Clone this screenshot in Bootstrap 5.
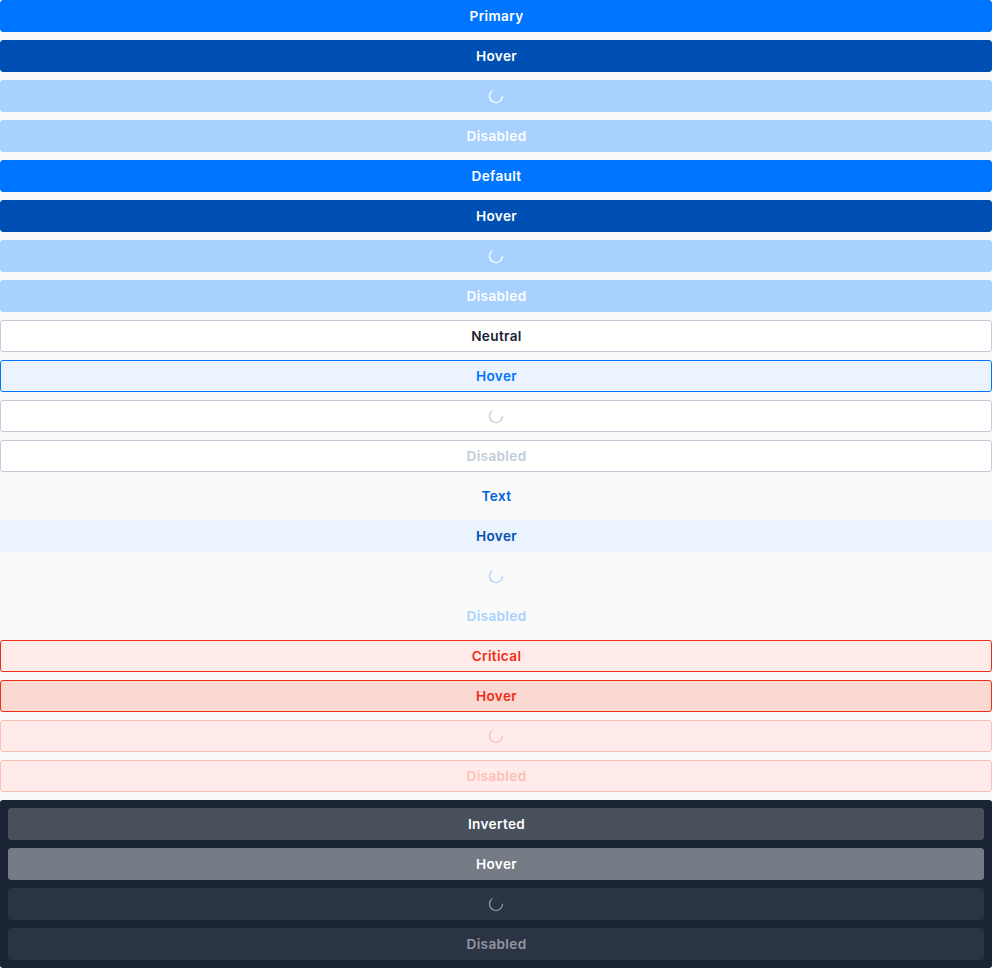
<!DOCTYPE html>
<html lang="en">
<head>
<meta charset="utf-8">
<meta name="viewport" content="width=device-width, initial-scale=1">
<title>Buttons</title>
<link href="https://cdn.jsdelivr.net/npm/bootstrap@5.3.0/dist/css/bootstrap.min.css" rel="stylesheet">
<style>
body{background:#fafafa;font-family:Inter,sans-serif}
.ui-btn{--bs-btn-font-family:Inter,sans-serif;--bs-btn-font-size:13.6px;--bs-btn-font-weight:600;--bs-btn-line-height:20px;--bs-btn-padding-y:5px;--bs-btn-padding-x:16px;--bs-btn-border-radius:3px;--bs-btn-color:var(--fg);--bs-btn-bg:var(--fill);--bs-btn-border-color:var(--line,transparent);--bs-btn-hover-color:var(--fg);--bs-btn-hover-bg:var(--fill);--bs-btn-hover-border-color:var(--line,transparent);--bs-btn-disabled-color:var(--fg);--bs-btn-disabled-bg:var(--fill);--bs-btn-disabled-border-color:var(--line,transparent);--bs-btn-disabled-opacity:1;height:32px;letter-spacing:.35px}
.ui-btn:not(.d-flex){padding-left:17px}
.solid{--fg:#fff;--fill:#0075ff;--line:#0075ff}
.solid.is-hover{--fill:#0050b3;--line:#0050b3}
.solid:disabled{--fill:#a8d1ff;--line:#a8d1ff}
.neutral{--fg:#1a2233;--fill:#fff;--line:#c2ccd6}
.neutral.is-hover{--fg:#0075ff;--fill:#ebf3ff;--line:#0075ff}
.neutral:disabled{--fg:#c2ccd6}
.plain{--fg:#0062d6;--fill:transparent}
.plain.is-hover{--fg:#0050b3;--fill:#ebf3ff}
.plain:disabled{--fg:#a8d1ff}
.critical{--fg:#f02d16;--fill:#ffebe9;--line:#f02d16}
.critical.is-hover{--fill:#fbd9d3}
.critical:disabled{--fg:#fcc0b8;--line:#fcc0b8}
.inverted{--fg:#fff;--fill:#48505c;--line:#48505c}
.inverted.is-hover{--fill:#757b84;--line:#757b84}
.inverted:disabled{--fg:#92979f;--fill:#2b3445;--line:#2b3445}
.dark-panel{background:#1a2333;border-radius:3px}
.spin{width:16px;height:16px}
</style>
</head>
<body>
<svg class="d-none"><symbol id="spin" viewBox="0 0 16 16"><path d="M4.1 2.8A6.5 6.5 0 1 0 14.5 8" fill="none" stroke="currentColor" stroke-width="1.15" stroke-linecap="round"/></symbol></svg>
<main class="d-grid gap-2">
<button class="btn ui-btn solid">Primary</button>
<button class="btn ui-btn solid is-hover">Hover</button>
<button class="btn ui-btn solid d-flex align-items-center justify-content-center" disabled aria-label="Loading"><svg class="spin"><use href="#spin"/></svg></button>
<button class="btn ui-btn solid" disabled>Disabled</button>
<button class="btn ui-btn solid">Default</button>
<button class="btn ui-btn solid is-hover">Hover</button>
<button class="btn ui-btn solid d-flex align-items-center justify-content-center" disabled aria-label="Loading"><svg class="spin"><use href="#spin"/></svg></button>
<button class="btn ui-btn solid" disabled>Disabled</button>
<button class="btn ui-btn neutral">Neutral</button>
<button class="btn ui-btn neutral is-hover">Hover</button>
<button class="btn ui-btn neutral d-flex align-items-center justify-content-center" disabled aria-label="Loading"><svg class="spin"><use href="#spin"/></svg></button>
<button class="btn ui-btn neutral" disabled>Disabled</button>
<button class="btn ui-btn plain">Text</button>
<button class="btn ui-btn plain is-hover">Hover</button>
<button class="btn ui-btn plain d-flex align-items-center justify-content-center" disabled aria-label="Loading"><svg class="spin"><use href="#spin"/></svg></button>
<button class="btn ui-btn plain" disabled>Disabled</button>
<button class="btn ui-btn critical">Critical</button>
<button class="btn ui-btn critical is-hover">Hover</button>
<button class="btn ui-btn critical d-flex align-items-center justify-content-center" disabled aria-label="Loading"><svg class="spin"><use href="#spin"/></svg></button>
<button class="btn ui-btn critical" disabled>Disabled</button>
<section class="dark-panel d-grid gap-2 p-2">
<button class="btn ui-btn inverted">Inverted</button>
<button class="btn ui-btn inverted is-hover">Hover</button>
<button class="btn ui-btn inverted d-flex align-items-center justify-content-center" disabled aria-label="Loading"><svg class="spin"><use href="#spin"/></svg></button>
<button class="btn ui-btn inverted" disabled>Disabled</button>
</section>
</main>
<script src="https://cdn.jsdelivr.net/npm/bootstrap@5.3.0/dist/js/bootstrap.bundle.min.js"></script>
</body>
</html>
